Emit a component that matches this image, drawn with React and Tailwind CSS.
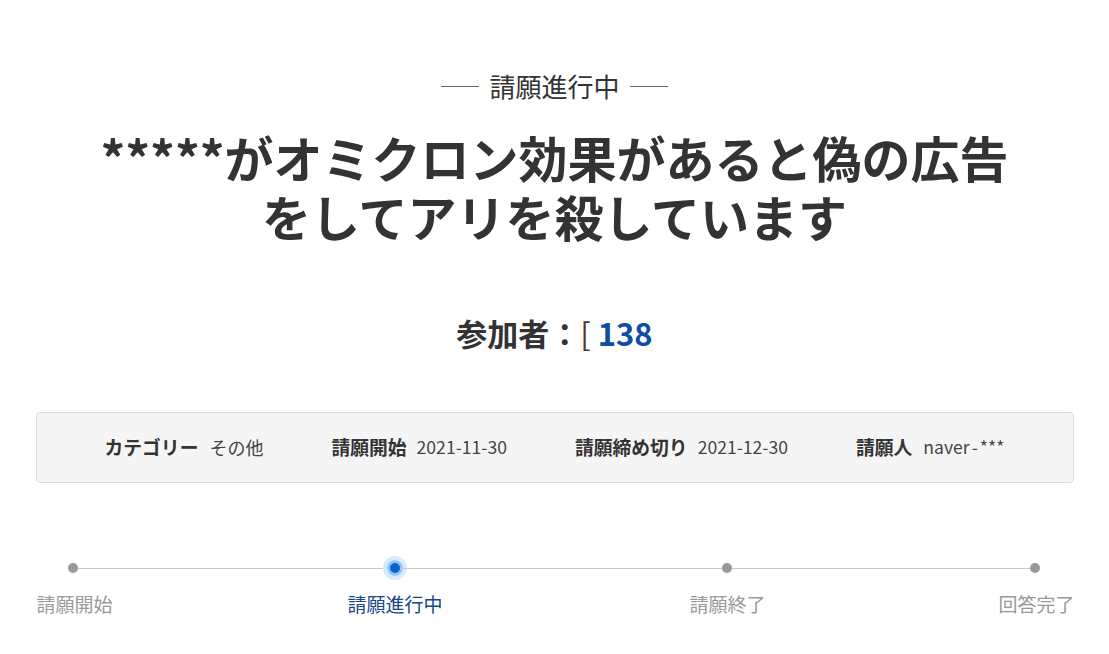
export default function App() {
  const font = { fontFamily: '"Noto Sans CJK JP", "Noto Sans", sans-serif' };
  return (
    <div className="w-[1109px] h-[654px] bg-white text-[#333]" style={font}>
      <div className="w-[1038px] mx-auto pt-[66px]">
        <div className="flex items-center justify-center gap-[10px]">
          <div className="w-[38px] h-px bg-[#666]" />
          <div className="text-[26px] leading-[40px] text-[#333]">請願進行中</div>
          <div className="w-[38px] h-px bg-[#666]" />
        </div>
        <h1 className="mt-[21px] text-center font-bold text-[49px] leading-[59px] text-[#333]">
          *****がオミクロン効果があると偽の広告<br />をしてアリを殺しています
        </h1>
        <div className="mt-[68px] text-center font-bold text-[31px] leading-[40px]">
          <span className="text-[#333]">参加者：</span>
          <span className="text-[#4a3b2a] font-normal">[ </span>
          <span className="text-[#0b4ea2]">138</span>
        </div>
        <div className="mt-[59px] h-[71px] bg-[#f5f5f5] border border-[#dcdcdc] rounded-[4px] flex items-center justify-evenly whitespace-nowrap">
          <div className="flex items-center gap-[11px]">
            <span className="font-bold text-[18.8px]">カテゴリー</span>
            <span className="text-[#444] text-[18px]">その他</span>
          </div>
          <div className="flex items-center gap-[10px]">
            <span className="font-bold text-[18.8px]">請願開始</span>
            <span className="text-[#444] text-[17.6px]">2021-11-30</span>
          </div>
          <div className="flex items-center gap-[10px]">
            <span className="font-bold text-[18.8px]">請願締め切り</span>
            <span className="text-[#444] text-[17.6px]">2021-12-30</span>
          </div>
          <div className="flex items-center gap-[11px]">
            <span className="font-bold text-[18.8px]">請願人</span>
            <span className="text-[#444] text-[17.6px]">naver<span className="px-[2px]">-</span>***</span>
          </div>
        </div>
        <div className="mt-[80px] flex items-center pl-[32px] h-[10px]">
          <div className="w-[10px] h-[10px] rounded-full bg-[#999]" />
          <div className="w-[312px] h-px bg-[#c8c8c8]" />
          <div className="w-[10px] h-[10px] rounded-full bg-[#0a63c9] ring-[3px] ring-[#8cc4ff] outline outline-[4px] outline-[#d6eaff] outline-offset-[3px]" />
          <div className="w-[322px] h-px bg-[#c8c8c8]" />
          <div className="w-[10px] h-[10px] rounded-full bg-[#999]" />
          <div className="w-[298px] h-px bg-[#c8c8c8]" />
          <div className="w-[10px] h-[10px] rounded-full bg-[#999]" />
        </div>
        <div className="mt-[17px] grid grid-cols-[312px_342px_309px_1fr] text-[19px] leading-[28px] text-[#999] whitespace-nowrap">
          <div className="pl-px">請願開始</div>
          <div className="text-[#17468a]">請願進行中</div>
          <div>請願終了</div>
          <div>回答完了</div>
        </div>
      </div>
    </div>
  );
}
